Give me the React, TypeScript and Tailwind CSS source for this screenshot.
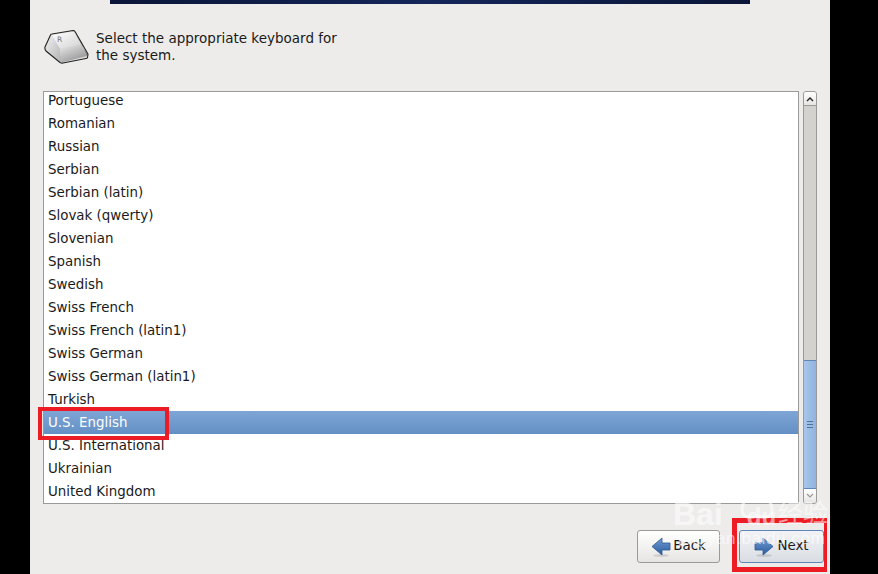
const rows = ["Portuguese","Romanian","Russian","Serbian","Serbian (latin)","Slovak (qwerty)","Slovenian","Spanish","Swedish","Swiss French","Swiss French (latin1)","Swiss German","Swiss German (latin1)","Turkish","U.S. English","U.S. International","Ukrainian","United Kingdom"];

function KeyIcon() {
  return (
    <svg width="46" height="36" viewBox="14 8 46 36">
      <defs>
        <linearGradient id="k1" x1="0" y1="0" x2="1" y2="1"><stop offset="0" stopColor="#ffffff"/><stop offset="1" stopColor="#d2d2d2"/></linearGradient>
        <linearGradient id="k2" x1="0" y1="0" x2="0.6" y2="1"><stop offset="0" stopColor="#eeeeee"/><stop offset="1" stopColor="#959595"/></linearGradient>
        <linearGradient id="k3" x1="0" y1="0" x2="1" y2="1"><stop offset="0" stopColor="#f2f2f2"/><stop offset="1" stopColor="#b0b0b0"/></linearGradient>
      </defs>
      <path d="M15 27 L20.5 15 Q21 14 22 14 L43 10.5 Q44.5 10.5 45 11.5 L58 34 L57.5 37.5 Q57 38.5 56 38.5 L33 43 Q31.5 43.3 30 42.5 L16 31 Q14.5 29 15 27 Z" fill="#ddd"/>
      <path d="M15.5 27 L22 15 L30 28.5 L31.5 42.5 L16 31 Z" fill="url(#k3)"/>
      <path d="M22 15 L44 11.5 L52 24 L30 28.5 Z" fill="url(#k1)"/>
      <path d="M30 28.5 L52 24 L57 36 L31.5 42.5 Z" fill="url(#k2)"/>
      <path d="M44 11.5 L57.5 34.5 L57 36 L52 24 Z" fill="#6a6a6a"/>
      <path d="M15 27 L20.5 15 Q21 14 22 14 L43 10.5 Q44.5 10.5 45 11.5 L58 34 L57.5 37.5 Q57 38.5 56 38.5 L33 43 Q31.5 43.3 30 42.5 L16 31 Q14.5 29 15 27 Z" fill="none" stroke="#222" strokeWidth="1.1"/>
      <text x="27" y="22" fontSize="7.5" fill="#777" fontFamily="DejaVu Sans, sans-serif">R</text>
    </svg>
  );
}

function Arrow({ right }: { right?: boolean }) {
  return (
    <svg width="20" height="20" viewBox="0 0 20 20">
      <defs>
        <linearGradient id={right ? "a2" : "a1"} x1="0" y1="0" x2="0" y2="1"><stop offset="0" stopColor="#6f9bd1"/><stop offset="1" stopColor="#2a5c9f"/></linearGradient>
      </defs>
      <ellipse cx="10" cy="18.5" rx="8" ry="1.5" fill="#000" opacity="0.12"/>
      {right ? (
        <path d="M1 6 H9 V1 L19 9.5 L9 18 V13 H1 Z" fill="url(#a2)" stroke="#2d5a94" strokeWidth="0.8"/>
      ) : (
        <path d="M19 6 H11 V1 L1 9.5 L11 18 V13 H19 Z" fill="url(#a1)" stroke="#2d5a94" strokeWidth="0.8"/>
      )}
    </svg>
  );
}

export default function App() {
  return (
    <div className="relative w-[878px] h-[574px] overflow-hidden bg-black text-[13.4px] text-[#1a1a1a]" style={{ fontFamily: '"DejaVu Sans", sans-serif' }}>
      <div className="ml-[30px] w-[800px] h-[574px] bg-[#edeceb] flex flex-col">
        <div className="ml-[80px] w-[640px] h-[4px] shrink-0 bg-gradient-to-r from-[#0a1638] via-[#14265a] to-[#0a1638]" />
        <div className="flex items-start mt-[24px] ml-[14px] h-[63px] shrink-0">
          <div className="w-[52px] shrink-0"><KeyIcon /></div>
          <p className="leading-[17px] w-[260px] mt-[2px] text-[13.5px]">Select the appropriate keyboard for the system.</p>
        </div>
        <div className="flex ml-[13px] h-[413px] shrink-0">
          <div className="w-[756px] h-full bg-white border border-[#9a9a98] overflow-hidden">
            {rows.map((r, i) => (
              <div key={r} className={`h-[23px] pl-[4px] leading-[23px] whitespace-nowrap ${i === 0 ? "-mt-[3px]" : ""} ${r === "U.S. English" ? "bg-gradient-to-b from-[#7fa5d6] to-[#6390c4] text-white" : ""}`}>{r}</div>
            ))}
          </div>
          <div className="ml-[4px] w-[14px] h-full flex flex-col bg-[#d3d2cf] border border-[#9a9a98] rounded-[3px] overflow-hidden">
            <div className="h-[14px] shrink-0 bg-gradient-to-b from-white to-[#e6e5e3] border-b border-[#9a9a98] flex items-center justify-center">
              <svg width="8" height="6" viewBox="0 0 8 6"><path d="M1 5 L4 2 L7 5" fill="none" stroke="#222" strokeWidth="1.4"/></svg>
            </div>
            <div className="flex-1" />
            <div className="h-[129px] shrink-0 bg-gradient-to-r from-[#a9c6ea] to-[#8fb3e0] border-y border-[#5f86b8] flex items-center justify-center">
              <div className="flex flex-col gap-[2px] w-[6px]">
                <div className="h-px bg-[#4f7199]" /><div className="h-px bg-[#4f7199]" /><div className="h-px bg-[#4f7199]" />
              </div>
            </div>
            <div className="h-[14px] shrink-0 bg-gradient-to-b from-white to-[#e6e5e3] flex items-center justify-center">
              <svg width="8" height="6" viewBox="0 0 8 6"><path d="M1 1 L4 4 L7 1" fill="none" stroke="#999" strokeWidth="1.2"/></svg>
            </div>
          </div>
        </div>
        <div className="flex justify-end gap-[19px] mt-[26px] mr-[6px]">
          <button className="w-[83px] h-[33px] rounded-[3px] border border-[#9a9a98] bg-gradient-to-b from-white to-[#e6e5e3] flex items-center justify-center gap-[2px]">
            <Arrow /><span>Back</span>
          </button>
          <button className="w-[85px] h-[33px] rounded-[3px] border border-[#5f86b8] bg-gradient-to-b from-[#f2f3f5] to-[#d9dde3] flex items-center justify-center gap-[3px]">
            <Arrow right /><span>Next</span>
          </button>
        </div>
      </div>

      <div className="absolute left-[38px] top-[407px] w-[131px] h-[33px] border-[4px] border-[#ed1c24]" />
      <div className="absolute left-[732px] top-[518px] w-[95px] h-[54px] border-[5px] border-r-[3px] border-[#ed1c24]" />

      <svg className="absolute left-[732px] top-[476px] opacity-60" width="48" height="44" viewBox="0 0 48 44" fill="none" stroke="#fff" strokeWidth="3">
        <ellipse cx="9" cy="15" rx="4" ry="6" />
        <ellipse cx="19" cy="8" rx="4" ry="6" />
        <ellipse cx="31" cy="8" rx="4" ry="6" />
        <ellipse cx="41" cy="15" rx="4" ry="6" />
        <path d="M10 34 C10 24 18 19 25 19 C32 19 40 24 40 34 C40 42 32 42 25 40 C18 42 10 42 10 34 Z" />
      </svg>
      <div className="absolute left-[673px] top-[498px] text-[32px] font-bold leading-none text-white/55 whitespace-nowrap" style={{ fontFamily: '"Liberation Sans", sans-serif' }}>Bai<span className="ml-[24px] text-[24px]">du</span></div>
      <div className="absolute left-[778px] top-[499px] text-[25px] leading-none text-white/55 whitespace-nowrap" style={{ fontFamily: '"Noto Sans CJK SC", sans-serif' }}>经验</div>
      <div className="absolute left-[678px] top-[530px] text-[17px] leading-none tracking-[0.6px] text-white/60 whitespace-nowrap" style={{ fontFamily: '"Liberation Sans", sans-serif' }}>jingyan.baidu.com</div>
    </div>
  );
}
